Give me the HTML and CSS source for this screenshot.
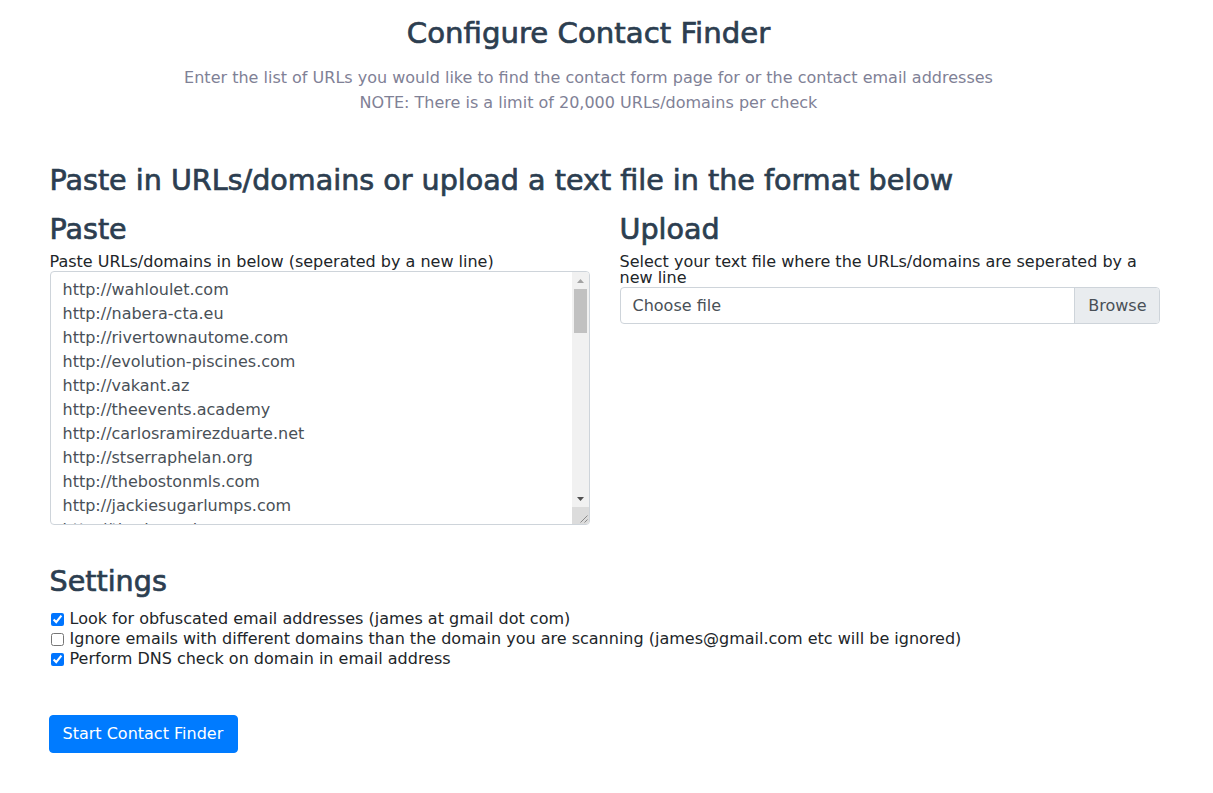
FILE: index.html
```html
<!DOCTYPE html>
<html lang="en">
<head>
<meta charset="utf-8">
<title>Configure Contact Finder</title>
<link rel="stylesheet" href="styles.css">
</head>
<body>
<div class="container">
  <header class="intro">
    <h2 class="title">Configure Contact Finder</h2>
    <p class="lead">Enter the list of URLs you would like to find the contact form page for or the contact email addresses<br>NOTE: There is a limit of 20,000 URLs/domains per check</p>
  </header>

  <h3 class="section-title">Paste in URLs/domains or upload a text file in the format below</h3>

  <div class="row">
    <div class="col">
      <h3 class="sub-title">Paste</h3>
      <label class="field-label" for="urls">Paste URLs/domains in below (seperated by a new line)</label>
      <div class="textarea-wrap">
        <textarea id="urls" class="form-control" spellcheck="false">http://wahloulet.com
http://nabera-cta.eu
http://rivertownautome.com
http://evolution-piscines.com
http://vakant.az
http://theevents.academy
http://carlosramirezduarte.net
http://stserraphelan.org
http://thebostonmls.com
http://jackiesugarlumps.com
http://tiradoservices.com
http://greenleafdental.net
http://mariposabakery.com
http://northwindtravel.org
http://kellerplumbing.com
http://bluewaterkayaks.com
http://atelier-lumiere.fr
http://oakridgevets.com
http://summitroofingco.com
http://lakeshorelibrary.org
http://pinecrestmotel.com
http://brightsmiles.dental
http://harborviewinn.com
http://coastalcoffee.co
http://redbarnfarms.net
http://silverlinefitness.com
http://meadowbrookschool.org
http://urbanbikeshop.com
http://goldenhourphoto.com
http://maplewoodrealty.com
http://sunrisebakehouse.com
http://westendtailors.co.uk
http://riverbendgolf.com
http://clearviewwindows.net
http://hilltopvineyards.com
http://stonebridgelaw.com
http://petalsandstems.com
http://ironworksgym.com
http://lighthousechurch.org
http://cedarcreekcabins.com
http://bellavistaspa.it
http://foxglovegardens.com
http://tidewaterpainting.com
http://alpinehomes.ca
http://crescentmoonyoga.com
http://heritagefurniture.com
http://quailrunkennels.com
http://sandpiperresort.com
http://keystoneauto.net
http://willowtreedaycare.com
http://blackbirdbrewing.com
http://evergreenlandscaping.net
http://copperpotkitchen.com</textarea>
        <div class="scrollbar" aria-hidden="true">
          <span class="sb-btn">
            <svg width="7" height="4" viewBox="0 0 7 4"><path d="M3.5 0L7 4H0z" fill="#a3a3a3"/></svg>
          </span>
          <span class="sb-track"><span class="sb-thumb"></span></span>
          <span class="sb-btn">
            <svg width="7" height="4" viewBox="0 0 7 4"><path d="M0 0H7L3.5 4z" fill="#505050"/></svg>
          </span>
          <span class="sb-corner">
            <svg width="17" height="17" viewBox="0 0 17 17"><path d="M15.5 8.5L8.5 15.5M15.5 12.5L12.5 15.5" stroke="#8a8a8a" stroke-width="1" fill="none"/></svg>
          </span>
        </div>
      </div>
    </div>
    <div class="col">
      <h3 class="sub-title">Upload</h3>
      <label class="field-label" for="file">Select your text file where the URLs/domains are seperated by a new line</label>
      <div class="custom-file">
        <span class="custom-file-text">Choose file</span>
        <span class="custom-file-btn">Browse</span>
      </div>
    </div>
  </div>

  <h3 class="settings-title">Settings</h3>
  <div class="checks">
    <label class="check"><input type="checkbox" checked> Look for obfuscated email addresses (james at gmail dot com)</label>
    <label class="check"><input type="checkbox"> Ignore emails with different domains than the domain you are scanning (james@gmail.com etc will be ignored)</label>
    <label class="check"><input type="checkbox" checked> Perform DNS check on domain in email address</label>
  </div>

  <button class="btn-primary" type="button">Start Contact Finder</button>
</div>
</body>
</html>
```
FILE: styles.css
```css
* { box-sizing: border-box; }

html, body {
  margin: 0;
  padding: 0;
  background: #fff;
}

body {
  font-family: "DejaVu Sans", "Noto Sans", sans-serif;
  font-size: 16px;
  line-height: 1.5;
  color: #212529;
}

.container {
  width: 1140px;
  margin: 0 auto;
  padding: 0 17px 0 13px;
}

.intro {
  text-align: center;
  padding-right: 32px;
  padding-top: 16px;
}

.title {
  margin: 0;
  font-size: 29.2px;
  line-height: 35px;
  font-weight: normal;
  color: #2c3e50;
  -webkit-text-stroke: 0.7px #2c3e50;
}

.lead {
  margin: 14px 0 0;
  font-size: 16px;
  line-height: 25px;
  color: #7f8196;
}

.section-title,
.sub-title,
.settings-title {
  margin: 0;
  font-size: 28.6px;
  line-height: 34px;
  font-weight: normal;
  color: #2c3e50;
  -webkit-text-stroke: 0.7px #2c3e50;
}

.section-title {
  margin-top: 48px;
}

.row {
  display: flex;
  gap: 30px;
  margin-top: 15px;
}

.col {
  flex: 1 1 0;
  min-width: 0;
}

.sub-title {
  margin-bottom: 8px;
}

.field-label {
  display: block;
  font-size: 16px;
  line-height: 16px;
  color: #212529;
  margin-bottom: 1px;
}

.textarea-wrap {
  position: relative;
}

.form-control {
  display: block;
  width: 100%;
  height: 254px;
  padding: 6px 29px 6px 12px;
  margin: 0;
  font-family: inherit;
  font-size: 16px;
  line-height: 24px;
  color: #495057;
  background: #fff;
  border: 1px solid #ced4da;
  border-radius: 4px;
  resize: none;
  overflow: hidden;
  white-space: pre;
}

.scrollbar {
  position: absolute;
  top: 1px;
  right: 1px;
  bottom: 1px;
  width: 17px;
  display: flex;
  flex-direction: column;
  background: #f1f1f1;
  border-radius: 0 3px 3px 0;
  overflow: hidden;
}

.sb-btn {
  flex: 0 0 17px;
  display: flex;
  align-items: center;
  justify-content: center;
}

.sb-track {
  flex: 1;
  padding: 0 2px;
}

.sb-thumb {
  display: block;
  height: 44px;
  background: #c1c1c1;
}

.sb-corner {
  flex: 0 0 17px;
  display: block;
  background: #dcdcdc;
  line-height: 0;
}

.custom-file {
  display: flex;
  height: 37px;
  border: 1px solid #ced4da;
  border-radius: 4px;
  overflow: hidden;
  color: #495057;
  line-height: 35px;
}

.custom-file-text {
  flex: 1;
  padding: 0 12px;
}

.custom-file-btn {
  padding: 0 12px 0 13px;
  background: #e9ecef;
  border-left: 1px solid #ced4da;
}

.settings-title {
  margin-top: 39px;
}

.checks {
  margin-top: 11px;
  display: flex;
  flex-direction: column;
}

.check {
  display: flex;
  align-items: center;
  line-height: 20px;
  font-size: 16px;
  color: #212529;
}

.check input {
  width: 13px;
  height: 13px;
  margin: 0 6px 0 1px;
  accent-color: #0075ff;
}

.btn-primary {
  display: inline-block;
  margin-top: 46px;
  margin-left: -1px;
  padding: 0 14px 0 13px;
  height: 38px;
  font-family: inherit;
  font-size: 16px;
  line-height: 36px;
  color: #fff;
  background: #007bff;
  border: 1px solid #007bff;
  border-radius: 4px;
  cursor: pointer;
}
```
